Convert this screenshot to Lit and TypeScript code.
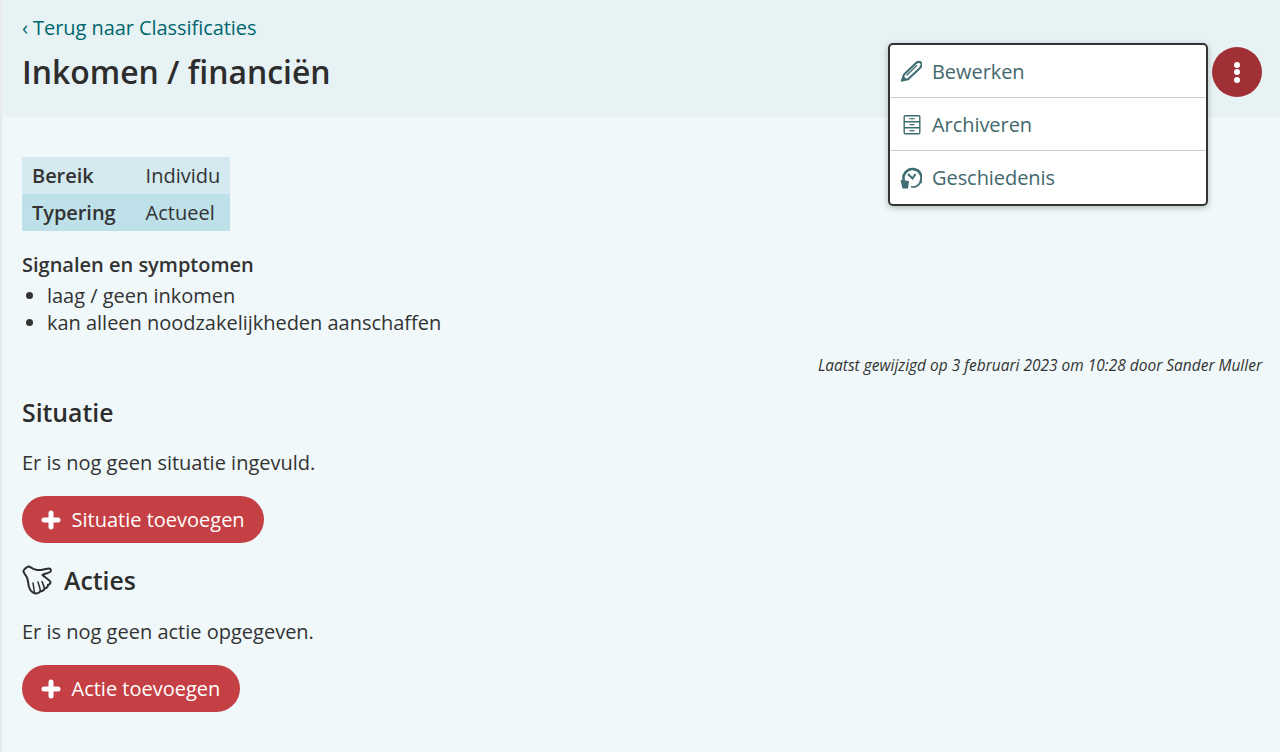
import { LitElement, html, css } from "lit";
import { customElement } from "lit/decorators.js";

const plus = html`<svg class="plus" viewBox="0 0 20 20" width="20" height="20"><path d="M10 3v14M3 10h14" stroke="#fff" stroke-width="5" stroke-linecap="round" fill="none"/></svg>`;

@customElement("app-root")
export class AppRoot extends LitElement {
  static styles = css`
    :host { display: block; height: 752px; background: #f0f8fa; border-left: 2px solid #e6eaea; box-sizing: border-box; position: relative; overflow: hidden;
      font-family: "Open Sans", sans-serif; font-size: 20px; line-height: 27px; color: #333; }
    .head { height: 117px; box-sizing: border-box; background: #e6f2f4; padding: 14px 20px 0; display: flex; flex-direction: column; }
    .back { color: #00666e; line-height: 27px; letter-spacing: -0.06px; }
    .head h1 { margin: 9px 0 0; font-size: 31.9px; line-height: 44px; font-weight: 600; color: #2d2d2d; }
    .body { padding: 40px 18px 0 20px; }
    table { border-collapse: collapse; }
    td, th { padding: 5px 10px; text-align: left; line-height: 27px; }
    th { font-weight: 600; padding-right: 30px; letter-spacing: -0.05px; }
    td { padding-left: 0; }
    .r1 { background: #d4e9f0; }
    .r2 { background: #bee0e9; }
    .sig { font-weight: 600; margin: 20px 0 0; }
    ul { margin: 4px 0 0; padding: 0 0 0 25px; letter-spacing: -0.02px; }
    .stamp { text-align: right; font-style: italic; font-size: 15.48px; line-height: 22px; margin-top: 18px; }
    h2 { font-size: 24.8px; line-height: 32px; font-weight: 600; margin: 20px 0 0; display: flex; align-items: center; gap: 12px; color: #2d2d2d; }
    p { margin: 21px 0 0; }
    .btn { display: inline-flex; align-items: center; gap: 10.5px; height: 47px; padding: 0 19.5px 0 19px; margin-top: 20px; background: #c44044; color: #fff; border-radius: 24px; box-sizing: border-box; }
    .plus { display: block; }
    .acties { margin-top: 21px; }
    .acties + p { margin-top: 22px; }
    .more { position: absolute; left: 1210px; top: 47px; width: 50px; height: 50px; border-radius: 50%; background: #a03036; display: flex; flex-direction: column; align-items: center; justify-content: center; gap: 1.500px; }
    .more i { display: block; width: 6px; height: 6px; border-radius: 50%; background: #fff; }
    .menu { position: absolute; left: 886px; top: 43px; width: 320px; height: 163px; box-sizing: border-box; background: #fff; border: 2px solid #333; border-radius: 5px; box-shadow: 0 2px 6px rgba(0,0,0,.25); display: flex; flex-direction: column; }
    .item { height: 53px; box-sizing: border-box; display: flex; align-items: center; gap: 10px; padding-left: 10px; color: #42686c; letter-spacing: -0.06px; border-bottom: 1px solid #ccc; }
    .item:last-child { border-bottom: 0; }
    .item svg { display: block; width: 22px; height: 22px; flex: none; }
  `;

  render() {
    return html`
      <div class="head">
        <div class="back">‹ Terug naar Classificaties</div>
        <h1>Inkomen / financiën</h1>
      </div>
      <div class="body">
        <table>
          <tr class="r1"><th>Bereik</th><td>Individu</td></tr>
          <tr class="r2"><th>Typering</th><td>Actueel</td></tr>
        </table>
        <div class="sig">Signalen en symptomen</div>
        <ul><li>laag / geen inkomen</li><li>kan alleen noodzakelijkheden aanschaffen</li></ul>
        <div class="stamp">Laatst gewijzigd op 3 februari 2023 om 10:28 door Sander Muller</div>
        <h2>Situatie</h2>
        <p>Er is nog geen situatie ingevuld.</p>
        <div class="btn">${plus}<span>Situatie toevoegen</span></div>
        <h2 class="acties">
          <svg width="30" height="30" viewBox="0 0 30 30" fill="none" stroke="#2d2d2d" stroke-width="2" stroke-linejoin="round" stroke-linecap="round"><path d="M1.500 6.500C1 5 5.500 1 7 1.500C9 2.500 11 4.500 15 5C19 5.500 24 3.500 27 3.500C29 3.500 29.500 6 28 7C26 8.500 22 8.500 20.500 10C23 12.500 28 15 28.500 17C29 19 27 19.500 26 20C26 22 24 23.500 22.500 23.500C22 25.500 20 26.500 18.500 26C17.500 28 14.500 29 12.500 28C10 27.500 8 25 7 22C6 18 6 14 4.500 11.500C3.500 10 2 8.500 1.500 6.500Z"/><path d="M12.500 28C12 25 11.500 21 11 18M18.500 26C18 23 17 20 16 17M22.500 23.500C22 21 21 19 20 16.500" stroke-width="1.500"/></svg>
          Acties
        </h2>
        <p>Er is nog geen actie opgegeven.</p>
        <div class="btn">${plus}<span>Actie toevoegen</span></div>
      </div>
      <div class="menu">
        <div class="item"><svg viewBox="0 0 22 22" fill="none" stroke="#3f6d72" stroke-width="2.100" stroke-linejoin="round"><path d="M2 20.500 4 14.500 15.500 3.500C17.500 1.500 20 1.500 21 2.800S21.500 6.500 19.500 8.500L8 19.200Z"/><path d="M6.500 15.500 17 5.200" stroke-width="1.300"/><path d="M1 21.500 3 15.500 7 19.800Z" fill="#3f6d72" stroke="none"/></svg>Bewerken</div>
        <div class="item"><svg viewBox="0 0 22 22" fill="none" stroke="#3f6d72" stroke-width="1.400"><rect x="4.200" y="2.700" width="15.600" height="18" rx="1.200"/><path d="M4.200 8.700h15.600M4.200 14.700h15.600"/><path d="M9.500 5.700h5M9.500 11.700h5M9.500 17.700h5" stroke-width="1.200"/></svg>Archiveren</div>
        <div class="item"><svg viewBox="0 0 22 22" fill="none" stroke="#3f6d72" stroke-width="2.600"><path d="M4 14A9 9 0 1 1 20 16"/><path d="M20 16A9 9 0 0 1 11 19.900" stroke-width="1.600"/><path d="M.500 13 9 14 8 21.500 2.500 21.500Z" fill="#3f6d72" stroke="none"/><path d="M8 7 12.500 11.500 15.500 7" stroke-width="2"/></svg>Geschiedenis</div>
      </div>
      <div class="more"><i></i><i></i><i></i></div>
    `;
  }
}
